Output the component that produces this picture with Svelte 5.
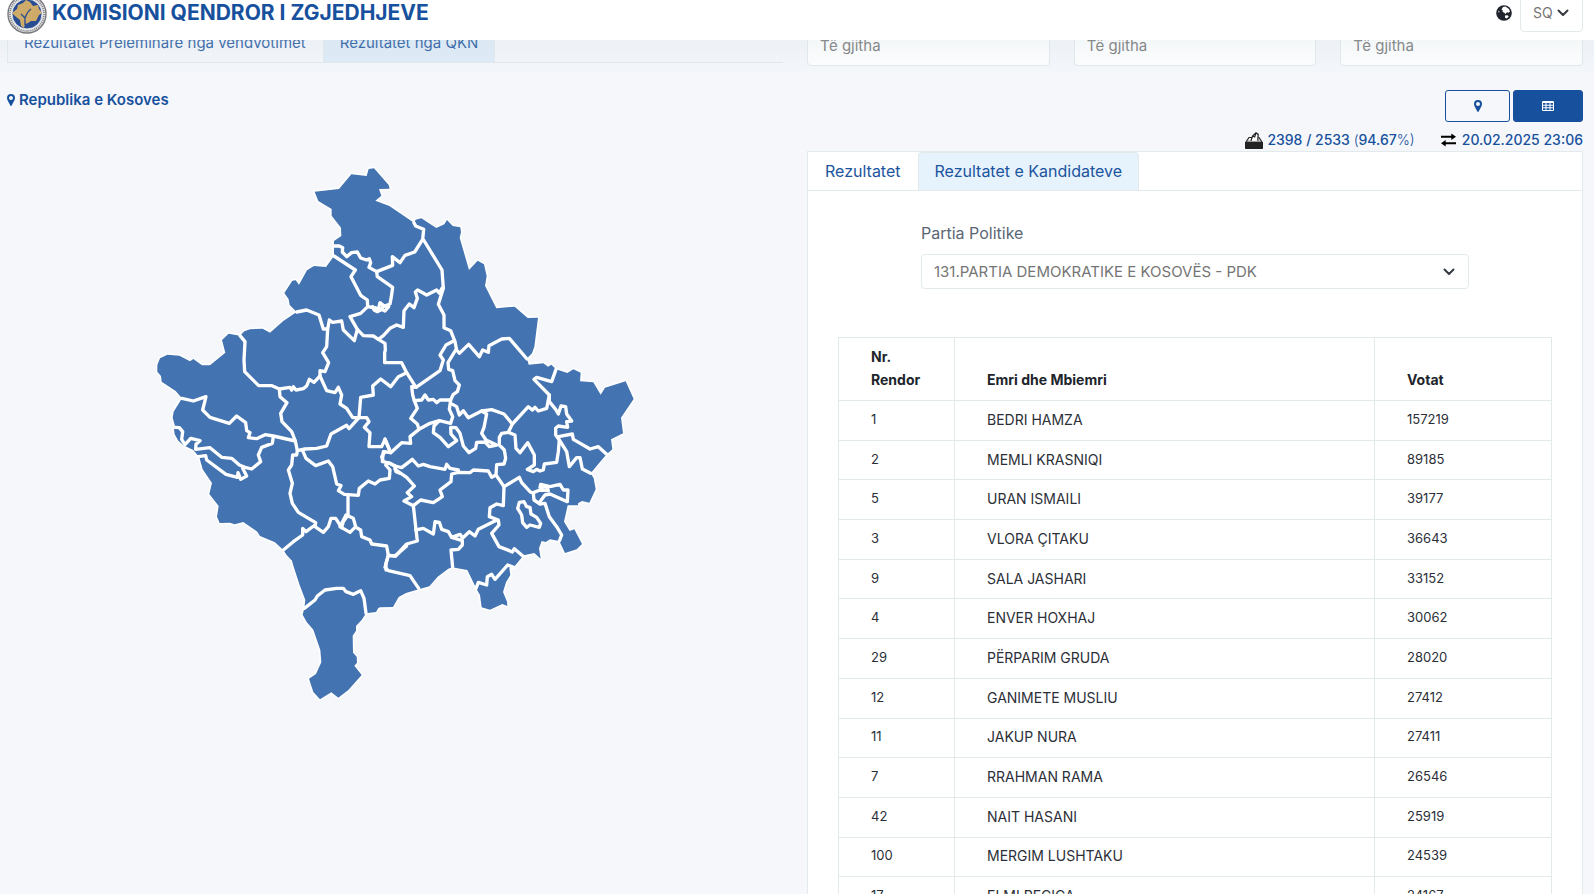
<script>
  const candidates = [
    [1, 'BEDRI HAMZA', 157219],
    [2, 'MEMLI KRASNIQI', 89185],
    [5, 'URAN ISMAILI', 39177],
    [3, 'VLORA ÇITAKU', 36643],
    [9, 'SALA JASHARI', 33152],
    [4, 'ENVER HOXHAJ', 30062],
    [29, 'PËRPARIM GRUDA', 28020],
    [12, 'GANIMETE MUSLIU', 27412],
    [11, 'JAKUP NURA', 27411],
    [7, 'RRAHMAN RAMA', 26546],
    [42, 'NAIT HASANI', 25919],
    [100, 'MERGIM LUSHTAKU', 24539],
    [17, 'ELMI REÇICA', 24167]
  ];

  const filters = ['Komuna', 'Qendra e votimit', 'Vendvotimi'];

  // Map sheets: the origin of each sheet in map units.
  const sheets = { A: [0, 0], B: [690, 0], C: [0, 540], D: [690, 540], E: [330, 1020], F: [690, 960] };

  // Turns "A 1,2 3,4 B 5,6" into one path; a sheet letter switches the origin.
  function trace(line) {
    let origin = sheets.A;
    const points = [];
    for (const token of line.split(' ')) {
      if (sheets[token]) origin = sheets[token];
      else {
        const [x, y] = token.split(',').map(Number);
        points.push(`${x + origin[0]} ${y + origin[1]}`);
      }
    }
    return 'M' + points.join('L');
  }

  const outline = trace(
    'A 552,243 574,228 573,203 545,167 545,147 505,123 494,95 567,87 604,43 650,48 656,27 672,25 716,75 719,86 687,87 694,107 676,122 718,138 750,160 ' +
    'B 102,188 107,179 124,175 169,204 193,193 201,180 218,198 241,202 243,217 239,233 267,330 293,302 312,313 320,349 315,377 349,445 404,440 443,474 474,473 470,505 463,560 456,580 441,595 ' +
    'D 446,74 490,70 504,80 514,74 528,88 562,99 580,88 602,98 600,124 640,127 662,164 675,143 737,124 761,177 723,233 729,280 693,298 697,328 680,343 660,366 632,400 641,415 647,448 628,488 606,483 594,490 594,496 563,496 552,545 569,573 583,568 ' +
    'F 606,192 590,208 555,219 538,183 510,178 497,186 485,183 477,205 482,236 463,219 431,226 401,262 388,265 391,285 378,307 369,336 381,365 382,378 367,372 330,389 305,382 300,345 290,328 262,270 216,262 205,266 173,290 148,319 116,328 78,339 56,351 39,381 0,382 ' +
    'E 355,324 348,336 318,340 305,360 288,378 288,392 278,407 279,458 290,470 291,488 283,497 305,525 265,570 235,593 214,577 180,598 160,576 147,536 168,522 184,487 181,450 160,389 140,366 128,344 133,325 136,300 120,258 101,200 96,182 80,165 70,150 45,127 0,108 ' +
    'C 322,575 280,546 254,553 240,548 209,549 201,530 206,498 178,462 186,429 158,388 148,352 130,330 100,316 85,302 74,283 72,268 75,258 68,233 71,215 96,175 77,153 35,125 33,108 22,95 22,75 30,55 52,44 88,47 120,64 130,57 156,76 180,76 226,38 216,0 ' +
    'A 236,521 270,527 283,514 300,508 338,506 360,518 400,483 440,456 419,435 416,418 403,399 427,362 437,361 447,374 471,331 492,318 528,321 552,288 552,258'
  ) + 'Z';

  const borders = [
    'A 552,258 568,258 578,263 577,276 590,290 605,278 622,276 632,294 650,300 658,296 662,308 657,322 680,335 728,316 727,290 B 60,308 75,286 104,276 128,238 131,208 107,198 102,188',
    'A 552,288 616,330 603,350 632,406 652,420 653,440 632,460 600,470 622,508 640,527 670,528 685,538 700,527 720,505 740,495 B 70,502 72,452 88,432 102,443 112,415 106,396 113,390 140,405 170,390 178,400 186,385',
    'A 680,335 682,350 728,382 724,410 720,432 700,440 690,450 678,444 653,440',
    'A 668,440 672,450 682,455 695,448 705,453 716,440 700,436 690,428 687,440',
    'A 440,456 470,450 507,465 520,507 533,507 538,480 548,487 575,483 580,510 613,542 622,508',
    'A 533,507 530,560 C 518,38 536,68 525,95 510,92 510,108',
    'A 270,527 285,545 282,600 C 284,95 326,137 366,137 388,147 420,142 425,150 430,140 438,150 460,146 470,138 478,118 492,127 510,108',
    'C 388,147 390,170 411,188 392,220 396,245 425,275 436,303 442,332 440,345 428,345 425,375 415,390 427,430 420,460 427,490 445,517 497,548 495,560 520,577 535,560 543,535 557,535 575,563 580,545 594,525 594,466',
    'C 96,175 130,183 168,170 158,210 180,232 238,250 260,228 287,248 290,272 300,278 295,293 320,296 345,284 370,288 436,303',
    'C 370,290 367,310 335,322 325,345 332,365 305,387 285,382 268,375 245,355 215,352 180,323 137,328 138,313 150,302 122,295 105,314 95,298 98,275 88,263 75,262',
    'C 145,350 167,347 170,360 228,403 262,412 264,398 272,418 290,408 278,385',
    'C 442,332 465,327 500,325 530,318 543,282 590,256 597,266 627,233 608,233 590,205 570,192 575,165 565,142 555,158 530,152 510,108',
    'C 458,332 468,355 497,377 535,363 548,380 560,432 573,437 565,452 583,463 625,466 628,445 655,423 675,432 690,420 718,415 720,390 707,375 715,368 735,378 738,395 750,400',
    'C 627,233 632,172 670,165 668,138 692,117 722,140 745,110 770,98',
    'C 627,233 650,233 657,245 643,262 660,278 657,320 695,320 705,298 722,338 700,335 697,365',
    'A 685,538 705,550 706,570 D 14,38 14,68 65,68 80,98 108,142',
    'D 108,142 180,92 190,60 180,45 198,15 222,2',
    'B 131,240 186,330 190,385 175,433 192,465 192,503 212,512 225,545 230,570 238,580 266,553 298,590 308,570 325,577 327,557 365,537 388,535 441,597',
    'D 227,30 204,68 206,88 218,92 225,122 238,135 232,155 220,163 212,180 180,180 170,188 160,178 145,180 135,165 125,180 103,182',
    'D 108,142 95,140 98,165 103,182 112,205 92,235 112,252 117,268 90,290 92,310 65,308 32,338 15,297',
    'D 117,268 150,250 178,242 212,250 218,230 208,208 212,180',
    'D 212,190 230,200 238,225 250,212 265,233 305,213 335,209 372,222 397,252 445,200 457,210 465,202 475,213 500,205 508,165 462,118 470,112 515,125 528,88',
    'D 305,213 320,222 312,262 305,280 318,300 350,315 328,320 315,306 290,307 287,325 267,338 250,318 240,280 228,263 212,262 213,282 230,302 205,320 180,292 160,278 162,258 178,242',
    'D 397,252 385,277 365,280 358,292 358,315 373,330 377,355 372,372 350,374 348,405 335,412 325,393 280,390 270,398 235,397 215,402 213,425 180,450 187,470 160,488 122,480 100,497 72,483 95,470 82,458 103,438 80,412 45,388 45,378 30,370 10,365 5,350 15,335',
    'D 45,378 65,383 97,358 115,378 130,373 150,380 195,388 200,373 210,385 235,390 235,397',
    'D 385,277 405,285 408,325 420,338 443,308 463,345 463,375 442,388 460,395 470,388 480,393 490,390 493,372 530,367 535,335 538,300 527,285 527,265 535,258 563,262 560,245 575,243 560,222 557,200 543,198 535,222 527,208 508,185 508,165',
    'D 535,290 577,282 580,298 630,327 655,320 680,343',
    'D 538,300 560,335 568,380 590,353 600,353 607,387 632,400',
    'D 348,405 372,440 370,497 350,492 330,503 328,530 355,540 357,555 335,580 F 357,200 388,212 397,216 403,206 431,230',
    'D 372,440 418,412 425,428 450,455 460,460 462,480 480,492 495,490 508,530 530,560 545,585 538,603',
    'D 460,458 480,450 505,452 500,440 480,442 482,433 510,440 540,433 550,450 564,450 562,485 510,462 495,465 480,485',
    'D 418,487 432,485 440,500 450,502 453,522 470,532 482,550 478,562 450,555 440,562 428,548 425,525 413,505 418,487',
    'D 100,497 107,560 F 112,183 80,192 47,228 25,226 15,262 25,272 90,287 116,325',
    'F 107,150 130,145 160,162 165,125 178,127 185,148 205,155 215,172 240,163 248,174 268,155 285,168 295,148 340,125 352,120',
    'F 215,172 247,182 247,195 235,208 213,210 218,262',
    'F 288,325 295,307 320,315 322,290 335,283 345,298 383,255 401,262',
    'E 70,150 100,125 128,105 128,85 138,95 165,75',
    'E 240,80 258,45 280,55 287,80 270,97 240,80',
    'E 287,82 302,90 305,110 330,120 335,132 380,138 385,166 378,190 378,210',
    'E 385,166 405,168 440,138',
    'E 133,325 165,300 172,288 195,270 230,265 250,265 258,275 280,283 302,272 312,295 318,340'
  ].map(trace);
</script>

{#snippet pin()}
  <svg class="pin" viewBox="0 0 8 12" aria-hidden="true">
    <path fill-rule="evenodd" d="M4 0a4 4 0 0 1 4 4c0 1-.3 1.700-.7 2.500L4.700 11.500a.8.8 0 0 1-1.400 0L.7 6.500C.3 5.700 0 5 0 4a4 4 0 0 1 4-4zm0 2a2 2 0 1 0 0 4 2 2 0 0 0 0-4z" />
  </svg>
{/snippet}

{#snippet chevron()}
  <svg class="chevron" viewBox="0 0 12 8" aria-hidden="true"><path d="M1.500 1.500 6 6l4.500-4.500" /></svg>
{/snippet}

<div class="page">
  <header>
    <a class="brand" href="#top">
      <svg class="seal" viewBox="0 0 40 40" aria-hidden="true">
        <circle cx="20" cy="20" r="19" fill="#e9e9ea" stroke="#77787c" stroke-width="1.400" />
        <circle cx="20" cy="20" r="17" fill="none" stroke="#85868a" stroke-width="1.800" stroke-dasharray="1.100 .9" />
        <circle cx="20" cy="20" r="15" fill="#274c91" stroke="#f3f3f3" stroke-width=".8" />
        <path fill="#cfab69" d="m19 6 4 2 3 4 5-1 1 4 3 4-3 2-3 6-5 0-3 2-3 1-1 4-3-2-1-6-5-4-3-3 5-4 1-4 5-2z" />
        <path fill="none" stroke="#274c91" stroke-width="1.300" d="m14 20 4 4q2-6 6-9M18 24v7" />
      </svg>
      <span>KOMISIONI QENDROR I ZGJEDHJEVE</span>
    </a>
    <div class="language">
      <svg class="globe" viewBox="0 0 16 16" aria-hidden="true">
        <circle cx="8" cy="8" r="7.800" fill="#20242c" />
        <path fill="#fff" d="m7 2 2.500-.6L13 4l1 2.500-1.500 1.200-1.500-.5L9.500 9 8 7.500 6.500 7 7 5.500 5.500 5 6 3.500zM9 10.500l2.500-.3 1.300 1.300-2 2-1.800-.8zM2 5.500l1.500 1L3 8z" />
      </svg>
      <div class="field lang">
        <select aria-label="Gjuha"><option>SQ</option></select>
        {@render chevron()}
      </div>
    </div>
  </header>

  <div class="top columns">
    <nav class="tabs source">
      <a href="#vendvotim">Rezultatet Preleminare nga vendvotimet</a>
      <a href="#qkn" class="active">Rezultatet nga QKN</a>
    </nav>
    <div class="filters">
      {#each filters as name}
        <select aria-label={name}><option>Të gjitha</option></select>
      {/each}
    </div>
  </div>

  <main class="columns">
    <section>
      <h1>{@render pin()}Republika e Kosoves</h1>
      <svg class="map" viewBox="0 0 1470 1650" role="img" aria-label="Harta e Kosovës">
        <path class="land" d={outline} />
        {#each borders as d}<path class="border" {d} />{/each}
      </svg>
    </section>

    <section>
      <div class="views">
        <button class="outlined" aria-label="Harta">{@render pin()}</button>
        <button class="solid" aria-label="Tabela">
          <svg class="grid" viewBox="0 0 12 10" aria-hidden="true">
            <path fill-rule="evenodd" d="M1 0h10a1 1 0 0 1 1 1v8a1 1 0 0 1-1 1H1a1 1 0 0 1-1-1V1a1 1 0 0 1 1-1zM1 2v1.800h2.500V2zm3.500 0v1.800h3V2zm4 0v1.800H11V2zM1 4.700v1.600h2.500V4.700zm3.500 0v1.600h3V4.700zm4 0v1.600H11V4.700zM1 7.200V9h2.500V7.200zm3.500 0V9h3V7.200zm4 0V9H11V7.200z" />
          </svg>
        </button>
      </div>
      <div class="stats">
        <div>
          <svg class="ballot" viewBox="0 0 18 17" aria-hidden="true">
            <path fill="#222" d="M0 10h18v6.200a.8.8 0 0 1-.8.800H.8a.8.8 0 0 1-.8-.8z" />
            <path fill="#999" d="M2 8.500h14V10H2z" />
            <path fill="none" stroke="#222" stroke-width="1.200" d="M1 10 4 5.500h3M17 10l-3-4.500h-.8" />
            <path fill="#fff" stroke="#222" stroke-width="1.200" d="M6 8.700 7.500 4 11 .8l2.200 1.600L12.800 8.700M7.500 4l2.200 1 1.300-4" />
          </svg>
          <span>2398 / 2533 <i>(</i>94.67<i>%)</i></span>
        </div>
        <div>
          <svg class="swap" viewBox="0 0 16 14" aria-hidden="true">
            <path d="M0 3.500h13M16 10.500H3" /><path class="head" d="m11 0 5 3.500L11 7zM5 7l-5 3.500L5 14z" />
          </svg>
          <span>20.02.2025 23:06</span>
        </div>
      </div>

      <div class="panel">
        <nav class="tabs results">
          <a href="#rezultatet">Rezultatet</a>
          <a href="#kandidatet" class="active">Rezultatet e Kandidateve</a>
        </nav>
        <div class="party">
          <label for="party">Partia Politike</label>
          <div class="field">
            <select id="party"><option>131.PARTIA DEMOKRATIKE E KOSOVËS - PDK</option></select>
            {@render chevron()}
          </div>
        </div>
        <table>
          <colgroup><col class="rank" /><col class="name" /><col class="votes" /></colgroup>
          <thead>
            <tr><th scope="col">Nr. Rendor</th><th scope="col">Emri dhe Mbiemri</th><th scope="col">Votat</th></tr>
          </thead>
          <tbody>
            {#each candidates as [number, name, votes]}
              <tr><td>{number}</td><td class="person">{name}</td><td>{votes}</td></tr>
            {/each}
          </tbody>
        </table>
      </div>
    </section>
  </main>
</div>

<style>
  :global(body) { margin: 0; background: #f5f7fb; }
  .page {
    height: 100vh;
    overflow: hidden;
    font-family: Inter, "Open Sans", sans-serif;
    font-size: 15px;
    line-height: 24px;
    color: #2c2f38;
  }
  .page :is(select, button) { font: inherit; box-sizing: border-box; margin: 0; }
  a { color: #1c549e; text-decoration: none; }
  svg { flex: none; }

  header {
    position: relative;
    z-index: 2;
    height: 40px;
    display: flex;
    justify-content: space-between;
    align-items: flex-end;
    padding: 0 11px 8px 7px;
    box-sizing: border-box;
    background: #fff;
  }
  header::after {
    content: "";
    position: absolute;
    inset: 40px 0 auto 0;
    height: 38px;
    background: linear-gradient(rgba(205, 220, 225, .22), rgba(230, 240, 245, 0));
    pointer-events: none;
  }
  .brand { display: flex; align-items: center; gap: 5px; font-size: 21px; font-weight: 700; color: #17519d; height: 36px; }
  .brand span { padding-bottom: 2px; }
  .seal { width: 40px; height: 40px; }
  .language { display: flex; align-items: center; gap: 8px; height: 38px; font-size: 14px; }
  .globe { width: 16px; height: 16px; }
  .field { position: relative; }
  .chevron { position: absolute; right: 14px; top: 50%; width: 12px; height: 8px; margin-top: -4px; pointer-events: none; }
  .chevron path { fill: none; stroke: #343a40; stroke-width: 2; stroke-linecap: round; stroke-linejoin: round; }
  select {
    appearance: none;
    width: 100%;
    height: 38px;
    padding: 0 12px;
    border: 1px solid #e2eaeb;
    border-radius: 4px;
    background: #fff;
    color: #757575;
  }
  .lang { width: 63px; }

  .columns { display: grid; grid-template-columns: 1fr 1fr; gap: 24px; padding-left: 7px; padding-right: 11px; }
  .top { margin-top: -16px; align-items: end; }
  .tabs { display: flex; border-bottom: 1px solid #e2eaeb; }
  .tabs a { padding: 6px 16px 7px; border: 1px solid transparent; border-bottom: 0; }
  .tabs a.active { background: #e6f3fd; border-color: #e2eaeb; border-radius: 4px 4px 0 0; }
  .results { font-size: 16px; }
  .source { margin-bottom: 3px; }
  .source a { border-left-color: #e2eaeb; }
  .source a.active { background: #dfecf8; }
  .filters { display: grid; grid-template-columns: repeat(3, 1fr); gap: 24px; }
  .filters select { padding-bottom: 3px; }

  main { padding-top: 24px; }
  section { min-width: 0; }
  h1 { display: flex; align-items: center; gap: 4px; height: 20px; margin: 0 0 50px; font-size: 15px; font-weight: 600; color: #17519d; }
  .pin { width: 8px; height: 12px; fill: #17519d; }
  .map { display: block; width: 490px; max-width: 100%; margin: 0 auto; }
  .land { fill: #4373b1; stroke: #fff; stroke-width: 9; stroke-linejoin: round; paint-order: stroke; }
  .border { fill: none; stroke: #fff; stroke-width: 10; stroke-linecap: round; stroke-linejoin: round; }

  .views { display: flex; justify-content: flex-end; gap: 3px; }
  button { display: grid; place-items: center; height: 32px; padding: 0; border: 1px solid #17519d; border-radius: 3px; }
  .outlined { width: 65px; background: transparent; }
  .solid { width: 70px; background: #17519d; }
  .grid { width: 12px; height: 10px; fill: #fff; }
  .stats { display: flex; justify-content: flex-end; gap: 26px; padding-top: 6px; height: 24px; font-weight: 500; font-size: 14px; color: #17519d; }
  .stats div { display: flex; align-items: center; white-space: nowrap; }
  .stats i { font-style: normal; font-weight: 300; }
  .ballot { width: 18px; height: 17px; margin-right: 4px; }
  .swap { width: 15px; height: 14px; margin-right: 6px; fill: none; stroke: #000; stroke-width: 2; }
  .swap .head { fill: #000; stroke: none; }

  .panel { background: #fff; border: 1px solid #e2eaeb; margin-top: -1px; }
  .party { margin: 30px 113px 0; color: #5b6675; }
  .party label { display: block; font-size: 16px; margin-bottom: 9px; }
  .party select { height: 35px; }
  table { width: calc(100% - 60px); height: 580px; margin: 48px 30px 0; border-collapse: collapse; table-layout: fixed; font-size: 13px; line-height: 23px; }
  .rank { width: 116px; }
  .votes { width: 177px; }
  th, td { border: 1px solid #e2eaeb; padding: 6px 32px 8px; text-align: left; vertical-align: middle; }
  th { padding: 7px 32px 9px; font-weight: 700; font-size: 14px; color: #20242c; vertical-align: bottom; }
  td { white-space: nowrap; }
  .person { font-size: 14px; }
</style>
